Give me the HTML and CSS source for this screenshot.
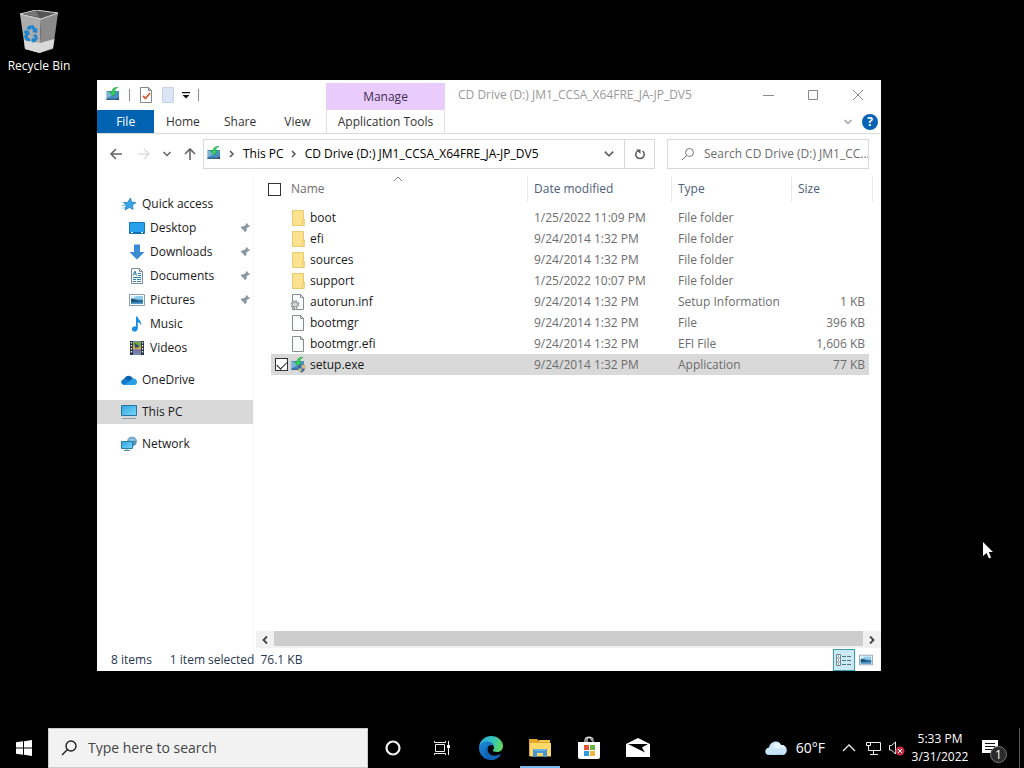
FILE: index.html
```html
<!DOCTYPE html>
<html lang="en">
<head>
  <meta charset="utf-8">
  <title>CD Drive (D:) JM1_CCSA_X64FRE_JA-JP_DV5</title>
  <meta name="viewport" content="width=device-width, initial-scale=1">
  <link rel="stylesheet" href="styles.css">
</head>
<body>

  <!-- Shared icons -->
  <svg class="icon-defs" width="0" height="0" aria-hidden="true">
    <defs>
      <linearGradient id="screen-fill" x1="0" y1="0" x2="1" y2="1">
        <stop offset="0" stop-color="#2ea5dc"/>
        <stop offset="1" stop-color="#7bd6fa"/>
      </linearGradient>
    </defs>
    <symbol id="drive" viewBox="0 0 16 16">
      <path d="M1.500 4H14v9H1.500z" fill="#4a8fc0"/>
      <path d="M2 5l11 0-11 6z" fill="#7eb6d8"/>
      <path d="M1.500 11.500h12.500v1.500h-12.500z" fill="#36638a"/>
      <path d="M11 13l3-3v3z" fill="#334a60"/>
      <path d="M13 .5C9 0 7 2 7 5H4.500L8 9l3.500-4H9.500C9.500 3 10.500 1.500 13 .5z" fill="#35d35b" stroke="#1a9c42" stroke-width=".6"/>
    </symbol>
    <symbol id="folder" viewBox="0 0 16 16">
      <path d="M2 .5h12v15H2z" fill="#fbe08a"/>
      <path d="M2.500.5h11v15h-11z" fill="#fce391" stroke="#e9cb6c"/>
      <path d="M12.500 9h2v6.500h-2z" fill="#f8dc80" stroke="#e3c25c" stroke-width=".6"/>
    </symbol>
    <symbol id="page" viewBox="0 0 16 16">
      <path d="M2.500.5h8l3 3v12h-11z" fill="#fdfdfd" stroke="#868b90"/>
      <path d="M10.500.5v3h3" fill="none" stroke="#868b90"/>
    </symbol>
    <symbol id="picture" viewBox="0 0 16 16">
      <path d="M.5 2.500h15v11H.5z" fill="#fff" stroke="#8a9db0"/>
      <path d="M2 4h12v8H2z" fill="#8dcbed"/>
      <path d="M2 8c3-2 5 0 12 0v4H2z" fill="#2a6f9f"/>
      <path d="M2 7c3-1 5 2 8 3H2z" fill="#215372"/>
      <path d="M2 10.500h12V12H2z" fill="#4d9bc8"/>
      <path d="M2 4h5l-3 2H2z" fill="#def3fb"/>
    </symbol>
    <symbol id="pin" viewBox="0 0 12 12">
      <path d="M7.500 1l3.500 3.500-1 .7-.8-.2-1.800 2 .1 2-1.300 1.200-2.300-2.400L1 11l3-3.300L1.700 5.300 3 4.200l2 .1 2-1.700-.2-.8z" fill="#8d979f"/>
    </symbol>
    <symbol id="chevron" viewBox="0 0 10 10">
      <path d="M1.500 3l3.500 3.500L8.500 3" fill="none" stroke="currentColor" stroke-width="1.500"/>
    </symbol>
  </svg>

  <main class="desktop">
    <a class="shortcut" href="#recycle-bin">
      <svg width="40" height="44" viewBox="0 0 40 44" aria-hidden="true">
        <path d="M1 4l21 4-1.500 35L6 39z" fill="#adadad"/>
        <path d="M22 8l17-5-5 36-13.500 4z" fill="#8b8b8b"/>
        <path d="M5 30l16 3 14.500-4L34 38l-13.500 5L6 39z" fill="#d9d9d9"/>
        <path d="M1 4L17 0l22 3-17 6z" fill="#555" stroke="#d9d9d9"/>
        <path d="M17 1l3 6L4 4z" fill="#777"/>
        <g fill="#1e84cf">
          <path d="M9 16l5-1 3 4 1.500-1-.5 5-5-1 1.500-1-2-3-1.500 2-3.500-1z"/>
          <path d="M6 20l4 1 1 4-1.500-.5-1 3 2.500 1v3l-4-1-2-4 1.500-3-2-.5z"/>
          <path d="M17 24l2 4-2.500 4-2 0v1.500L12 30l3-3v1.500h1.500L14 25z"/>
        </g>
      </svg>
      <span>Recycle Bin</span>
    </a>

    <section class="window" aria-label="File Explorer">
      <header class="ribbon">
        <div class="quick-bar">
          <svg width="16" height="16"><use href="#drive"/></svg>
          <i class="bar-line"></i>
          <button aria-label="Properties">
            <svg width="16" height="18" viewBox="0 0 16 18">
              <path d="M2.500 1.500h8l3 3v12h-11z" fill="#fff" stroke="#858585"/>
              <path d="M10.500 1.500v3h3" fill="none" stroke="#858585"/>
              <path d="M5 10l2.500 2.500L12 7" fill="none" stroke="#e2582c" stroke-width="1.800"/>
            </svg>
          </button>
          <button aria-label="New folder">
            <svg width="16" height="18" viewBox="0 0 16 18">
              <path d="M2.500 1.500h11v15h-11z" fill="#dbe5f3" stroke="#c6d2e2"/>
              <path d="M12 11h2v5.500h-2z" fill="#cddaeb"/>
            </svg>
          </button>
          <button aria-label="Customize Quick Access Toolbar">
            <svg width="8" height="10" viewBox="0 0 8 10">
              <path d="M0 2h8v1.200H0zM.5 5h7L4 8.500z" fill="#111"/>
            </svg>
          </button>
          <i class="bar-line"></i>
        </div>
        <nav class="tabs">
          <button class="tab file-tab">File</button>
          <button class="tab">Home</button>
          <button class="tab">Share</button>
          <button class="tab">View</button>
        </nav>
        <div class="manage">Manage</div>
        <button class="tab tools-tab">Application Tools</button>
        <div class="title-bar">
          <h1>CD Drive (D:) JM1_CCSA_X64FRE_JA-JP_DV5</h1>
          <div class="window-btns">
            <button aria-label="Minimize"><svg width="12" height="12"><path d="M1 6.500h11" stroke="#888"/></svg></button>
            <button aria-label="Maximize"><svg width="12" height="12"><path d="M1.500 1.500h9v9h-9z" fill="none" stroke="#888"/></svg></button>
            <button aria-label="Close"><svg width="12" height="12"><path d="M1 1l10 10M11 1L1 11" stroke="#888"/></svg></button>
          </div>
        </div>
        <div class="ribbon-end">
          <button class="light" aria-label="Expand the ribbon"><svg width="10" height="10"><use href="#chevron"/></svg></button>
          <button class="help" aria-label="Help">?</button>
        </div>
      </header>

      <div class="nav-bar">
        <div class="nav-btns">
          <button aria-label="Back"><svg width="14" height="14"><path d="M13 7H2M7 2L2 7l5 5" fill="none" stroke="#666" stroke-width="1.600"/></svg></button>
          <button aria-label="Forward"><svg width="14" height="14"><path d="M1 7h11M7 2l5 5-5 5" fill="none" stroke="#dedede" stroke-width="1.500"/></svg></button>
          <button class="recent" aria-label="Recent locations"><svg width="10" height="10"><use href="#chevron"/></svg></button>
          <button aria-label="Up"><svg width="14" height="14"><path d="M7 13V2M2 7l5-5 5 5" fill="none" stroke="#666" stroke-width="1.600"/></svg></button>
        </div>
        <div class="address">
          <svg width="16" height="16"><use href="#drive"/></svg>
          <svg class="crumb-arrow" width="10" height="10"><path d="M3 2l3 3-3 3" fill="none" stroke="#555" stroke-width="1.500"/></svg>
          <button>This PC</button>
          <svg class="crumb-arrow" width="10" height="10"><path d="M3 2l3 3-3 3" fill="none" stroke="#555" stroke-width="1.500"/></svg>
          <button class="crumb-last">CD Drive (D:) JM1_CCSA_X64FRE_JA-JP_DV5</button>
          <button class="address-drop" aria-label="Previous locations"><svg width="12" height="12"><use href="#chevron"/></svg></button>
          <button class="refresh" aria-label="Refresh">
            <svg width="12" height="12"><path d="M3.500 3a4.200 4.200 0 1 0 5 0" fill="none" stroke="#555" stroke-width="1.500"/><path d="M2 1.500h4.500V6z" fill="#555"/></svg>
          </button>
        </div>
        <label class="find">
          <svg width="14" height="14"><circle cx="8.500" cy="5.500" r="4" fill="none" stroke="#777"/><path d="M5.500 8.500L1 13" stroke="#777"/></svg>
          <input type="text" placeholder="Search CD Drive (D:) JM1_CC..." aria-label="Search CD Drive">
        </label>
      </div>

      <div class="content">
        <nav class="sidebar">
          <a class="place" href="#quick"><svg width="16" height="16"><path d="M9.500 2l1 4 4.500.5-3.500 2.700.5 4.300-3.500-2L4 14l1-4.500L2.500 6.500h4z" fill="#37a5e6" stroke="#1878bd" stroke-width=".7"/><path d="M1 9.500h3M1.500 12h2" stroke="#7cc2ec"/></svg>Quick access</a>
          <a class="place sub" href="#desktop"><svg width="16" height="16"><path d="M.5 2.500h15v11H.5z" fill="#29a0ee" stroke="#1478bf"/><path d="M1 12h14v1H1z" fill="#0f68a8"/><path d="M2 12.500h2m8 0h2" stroke="#fff"/></svg>Desktop<svg class="pin" width="12" height="12"><use href="#pin"/></svg></a>
          <a class="place sub" href="#downloads"><svg width="16" height="16"><path d="M5 .5h6V8h4.500L8 15.500.5 8H5z" fill="#3d8bd4"/></svg>Downloads<svg class="pin" width="12" height="12"><use href="#pin"/></svg></a>
          <a class="place sub" href="#documents"><svg width="16" height="16"><path d="M2.500.5h8l3 3v12h-11z" fill="#fff" stroke="#7d8b98"/><path d="M10.500.5v3h3" fill="none" stroke="#7d8b98"/><path d="M4 7.500L6 3l1.500 4.500M4.500 6h3M9 5.500h3M9 7.500h3M4 9.500h8M4 11.500h3m1 0h4M4 13.500h3m1 0h4" fill="none" stroke="#2f86a8"/></svg>Documents<svg class="pin" width="12" height="12"><use href="#pin"/></svg></a>
          <a class="place sub" href="#pictures"><svg width="16" height="16"><use href="#picture"/></svg>Pictures<svg class="pin" width="12" height="12"><use href="#pin"/></svg></a>
          <a class="place sub" href="#music"><svg width="16" height="16"><path d="M7 .5h1.500C9 4 13 4.500 12 9.500 11.500 7 10 6.500 8.800 6.500V12c0 5-6.300 4.500-6 1 .2-2 2.200-3 4.200-2.500z" fill="#1b8ee0"/></svg>Music</a>
          <a class="place sub" href="#videos"><svg width="16" height="16"><path d="M1 1h14v14H1z" fill="#2d3040"/><path d="M4 1h8v14H4z" fill="#698ab1"/><path d="M4 2h8v4H4z" fill="#78a845"/><path d="M4 6h8v3H4z" fill="#d6b437"/><path d="M6 3l5 4-5 1z" fill="#324a84"/><path d="M5 10h6v3H5z" fill="#8770a4"/><path d="M2.500 2v12M13.500 2v12" stroke="#eee" stroke-width="1.300" stroke-dasharray="1.500 1.500"/></svg>Videos</a>
          <a class="place top" href="#onedrive"><svg width="16" height="16"><path d="M2.500 8C4 3 9.500 2 12 6.500L8 11z" fill="#0a62b2"/><path d="M3.500 13C-.5 13-1 8 2.500 7.300 5 6.500 7 8 9 9.500l4 3.500z" fill="#1479cc"/><path d="M3 13l9-6.500c3-.3 4 2 4 3.500 0 2-1 3-3 3z" fill="#27a0e8"/></svg>OneDrive</a>
          <a class="place top current" href="#this-pc"><svg width="16" height="16"><path d="M.5 1.500h15v10H.5z" fill="url(#screen-fill)" stroke="#25739e"/><path d="M1 14.500h14" stroke="#8b9cab"/></svg>This PC</a>
          <a class="place top" href="#network"><svg width="16" height="16"><circle cx="11" cy="5.500" r="4.800" fill="#4f8fb8"/><path d="M7 4h8M11 1v8M8 2c2 2 4 2 6 0" fill="none" stroke="#a9d2e8"/><path d="M.5 5.500h11v7H.5z" fill="url(#screen-fill)" stroke="#237fae"/><path d="M3 14.500h6M6 12v2" stroke="#508cad"/></svg>Network</a>
        </nav>

        <div class="pane">
          <table class="files">
            <thead>
              <tr>
                <th class="col-check"><input type="checkbox" aria-label="Select all"></th>
                <th class="col-name"><button>Name</button><svg class="sort" width="10" height="6"><path d="M1 5l4-4 4 4" fill="none" stroke="#777"/></svg></th>
                <th class="col-date"><button>Date modified</button></th>
                <th class="col-type"><button>Type</button></th>
                <th class="col-size"><button>Size</button></th>
              </tr>
            </thead>
            <tbody>
              <tr><td></td><td><span class="file"><svg width="16" height="16"><use href="#folder"/></svg>boot</span></td><td>1/25/2022 11:09 PM</td><td>File folder</td><td></td></tr>
              <tr><td></td><td><span class="file"><svg width="16" height="16"><use href="#folder"/></svg>efi</span></td><td>9/24/2014 1:32 PM</td><td>File folder</td><td></td></tr>
              <tr><td></td><td><span class="file"><svg width="16" height="16"><use href="#folder"/></svg>sources</span></td><td>9/24/2014 1:32 PM</td><td>File folder</td><td></td></tr>
              <tr><td></td><td><span class="file"><svg width="16" height="16"><use href="#folder"/></svg>support</span></td><td>1/25/2022 10:07 PM</td><td>File folder</td><td></td></tr>
              <tr><td></td><td><span class="file"><svg width="16" height="16"><use href="#page"/><circle cx="5" cy="10.500" r="3.200" fill="#eee" stroke="#999" stroke-width="2.500" stroke-dasharray="1.500 1"/><circle cx="5" cy="10.500" r="2.500" fill="#eee" stroke="#999"/><circle cx="5" cy="10.500" r="1" fill="#fff" stroke="#999" stroke-width=".5"/></svg>autorun.inf</span></td><td>9/24/2014 1:32 PM</td><td>Setup Information</td><td>1 KB</td></tr>
              <tr><td></td><td><span class="file"><svg width="16" height="16"><use href="#page"/></svg>bootmgr</span></td><td>9/24/2014 1:32 PM</td><td>File</td><td>396 KB</td></tr>
              <tr><td></td><td><span class="file"><svg width="16" height="16"><use href="#page"/></svg>bootmgr.efi</span></td><td>9/24/2014 1:32 PM</td><td>EFI File</td><td>1,606 KB</td></tr>
              <tr class="selected"><td><input type="checkbox" checked aria-label="Select setup.exe"></td><td><span class="file"><svg width="16" height="16"><use href="#drive"/><path d="M8 8.500l3.500-1 3.500 1c0 4-1 6-3.500 7C9 14.500 8 12.500 8 8.500z" fill="#3568b5" stroke="#667" stroke-width=".5"/><path d="M11.500 7.800v3.700H15c.2-1 .3-2 0-3zM11.500 11.500v3.700c-2-.8-3-2-3.300-3.700z" fill="#d9c27a"/></svg>setup.exe</span></td><td>9/24/2014 1:32 PM</td><td>Application</td><td>77 KB</td></tr>
            </tbody>
          </table>
          <div class="scrollbar">
            <button aria-label="Scroll left"><svg width="10" height="10"><path d="M7 1.500L3.500 5 7 8.500" fill="none" stroke="#444" stroke-width="1.800"/></svg></button>
            <div class="thumb"></div>
            <button aria-label="Scroll right"><svg width="10" height="10"><path d="M3 1.500L6.500 5 3 8.500" fill="none" stroke="#444" stroke-width="1.800"/></svg></button>
          </div>
        </div>
      </div>

      <footer class="status">
        <span class="count">8 items</span>
        <span>1 item selected</span>
        <span>76.1 KB</span>
        <div class="views">
          <button class="active" aria-label="Details view"><svg width="18" height="14"><path d="M1.500 1.500h4v11h-4zM1.500 5h4M1.500 9h4" fill="#fff" stroke="#6d8795"/><path d="M3 3h1M3 7h1M3 11h1" stroke="#26485c"/><path d="M7 3.500h4m1 0h4M7 7.500h4m1 0h4M7 11.500h4m1 0h4" stroke="#557484"/></svg></button>
          <button aria-label="Large icons view"><svg width="14" height="14"><use href="#picture"/></svg></button>
        </div>
      </footer>
    </section>

    <svg class="cursor" width="12" height="18" aria-hidden="true"><path d="M1 0v14l3.500-3L7 16.500l2-1L6.800 10H11z" fill="#fff"/></svg>
  </main>

  <footer class="taskbar">
    <button class="start" aria-label="Start"><svg width="16" height="16"><path d="M0 2.300L7 1.300v6.200H0zM8 1.200L16 0v7.500H8zM0 8.500h7v6.200l-7-1zM8 8.500h8V16l-8-1.200z" fill="#fff"/></svg></button>
    <label class="task-search">
      <svg width="18" height="18"><circle cx="11" cy="7" r="5" fill="none" stroke="#222" stroke-width="1.400"/><path d="M7.500 10.500L2 16" stroke="#222" stroke-width="1.400"/></svg>
      <input type="text" placeholder="Type here to search" aria-label="Type here to search">
    </label>
    <div class="apps">
      <button aria-label="Cortana"><svg width="16" height="16"><circle cx="8" cy="8" r="6.500" fill="none" stroke="#f3f3f3" stroke-width="2.200"/></svg></button>
      <button aria-label="Task View"><svg width="18" height="16"><path d="M2.500 4.500h9v7h-9zM1.500 1v1.500h11V1M1.500 15v-1.500h11V15M15.500 1v14" fill="none" stroke="#eee"/><path d="M14 5h3v3h-3z" fill="#fff"/></svg></button>
      <button aria-label="Microsoft Edge">
        <svg width="24" height="24" viewBox="0 0 24 24">
          <defs>
            <linearGradient id="edge-top" x1="0" y1=".3" x2="1" y2=".5"><stop offset="0" stop-color="#25a7e0"/><stop offset=".6" stop-color="#38c5b1"/><stop offset="1" stop-color="#64d958"/></linearGradient>
            <linearGradient id="edge-low" x1="0" y1="0" x2="1" y2="1"><stop offset="0" stop-color="#1b8bda"/><stop offset="1" stop-color="#0c4f9c"/></linearGradient>
          </defs>
          <path d="M0 11C1 4 6 0 12 0c7 0 12 5 12 10 0 4-3 6-6 6-3 0-4.500-1-4-2 1-1 1.500-2 1-3-1-4-9-6-15 0z" fill="url(#edge-top)"/>
          <path d="M0 12C1 7 5 5 9 5.500c3 .3 5.500 2 6 4.500-1-1-3-1.500-4.500-.5-4 2.500-2 9 3 10 3 .7 6-.2 8-1.500-2 4-6 6-10 6C5 24 0 18 0 12z" fill="url(#edge-low)"/>
          <path d="M9 10c-2 5 1 10 7 10 2 0 4-.7 6-2-2 4-6 6-10 6-6-3-8-11-3-14z" fill="#1265b6"/>
        </svg>
      </button>
      <button class="open" aria-label="File Explorer"><svg width="22" height="20"><path d="M0 1h8l2 2h11v15H0z" fill="#e3a72d"/><path d="M1 5h21v13.500H1z" fill="#ffd968"/><path d="M10 2h11v2H10z" fill="#f6c54d"/><path d="M4 11h14v8h-4v-4H8v4H4z" fill="#4694d4"/><path d="M5 11h12v2H5z" fill="#68b4e8"/></svg></button>
      <button aria-label="Microsoft Store"><svg width="24" height="24"><path d="M8 7V4c0-4 8-4 8 0v3M10 6V2.500c2-2 4.500-.5 4.500 2" fill="none" stroke="#ddd" stroke-width="1.200"/><path d="M1 6h22v15c0 1-1 2-2 2H3c-1 0-2-1-2-2z" fill="#fff"/><path d="M7 9h5v5H7z" fill="#e7543d"/><path d="M13 9h5v5h-5z" fill="#6db548"/><path d="M7 15h5v5H7z" fill="#2b9ed8"/><path d="M13 15h5v5h-5z" fill="#efb73a"/></svg></button>
      <button aria-label="Mail"><svg width="24" height="20"><path d="M0 6L12 0l12 6v13H0z" fill="#fff"/><path d="M2 6h20l-6 3.500 3 5L10 10z" fill="#050505"/></svg></button>
    </div>
    <div class="tray">
      <button class="weather">
        <svg width="22" height="16" viewBox="0 0 22 16"><path d="M4 15C-1 15-1 8 4 7.500 5 1 14-1 16 5c7-1 8 10 1 10z" fill="#c8e6f8"/><path d="M8 7c0-4 5-5 8-2 3 0 5 2 5 4-4-2-5-2-8 0z" fill="#e6f4fd"/><path d="M3 14c5 1 11 1 15-1-1 1.500-2 2-4 2H4z" fill="#8fc2e8"/></svg>
        60°F
      </button>
      <button aria-label="Show hidden icons"><svg width="14" height="8"><path d="M1 7l6-6 6 6" fill="none" stroke="#eee" stroke-width="1.300"/></svg></button>
      <button aria-label="Network"><svg width="17" height="16"><path d="M5.500 2.500h10v8h-12V7M8.500 11v3M5 14.500h8" fill="none" stroke="#eee"/><path d="M1.500 2.500h4v3h-4zM3.500 5v3" fill="#000" stroke="#eee"/></svg></button>
      <button aria-label="Volume muted"><svg width="18" height="16"><path d="M1.500 5.500h2L7.500 2v12l-4-4h-2z" fill="none" stroke="#eee"/><circle cx="12" cy="11" r="4.500" fill="#c82c3d"/><path d="M10 9l4 4m0-4l-4 4" stroke="#fff"/></svg></button>
      <button class="clock"><time>5:33 PM</time><time>3/31/2022</time></button>
      <button class="notices" aria-label="1 new notification"><svg width="16" height="16"><path d="M0 0h16v13h-3v3l-3-3H0z" fill="#fff"/><path d="M3 3.500h10M3 6.500h10M3 9.500h7" stroke="#111"/></svg><span class="badge">1</span></button>
      <button class="show-desktop" aria-label="Show desktop"></button>
    </div>
  </footer>

</body>
</html>
```
FILE: styles.css
```css
* {
  box-sizing: border-box;
}

html, body {
  height: 100%;
  margin: 0;
}

body {
  display: flex;
  flex-direction: column;
  overflow: hidden;
  background: black;
  color: #1a1a1a;
  font: 12px/16px "Open Sans", "Noto Sans", sans-serif;
}

button, input {
  margin: 0;
  padding: 0;
  border: none;
  background: none;
  color: inherit;
  font: inherit;
}

button {
  display: flex;
  align-items: center;
  justify-content: center;
}

a {
  color: inherit;
  text-decoration: none;
}

svg {
  display: block;
  flex: none;
}

.icon-defs {
  position: absolute;
}

.desktop {
  flex: 1;
  position: relative;
}

.shortcut {
  position: absolute;
  left: 0;
  top: 10px;
  width: 78px;
  display: flex;
  flex-direction: column;
  align-items: center;
  gap: 4px;
  color: white;
}

/* Explorer window */
.window {
  position: absolute;
  left: 97px;
  right: 143px;
  top: 80px;
  bottom: 57px;
  display: flex;
  flex-direction: column;
  background: white;
}

.ribbon {
  display: grid;
  grid-template-columns: 229px 119px 1fr;
  grid-template-rows: 30px 23px;
  grid-auto-flow: column;
  border-bottom: 1px solid #dadbdc;
}

.quick-bar {
  display: flex;
  align-items: center;
  gap: 6px;
  padding-left: 8px;
}

.bar-line {
  width: 1px;
  height: 12px;
  margin: 0 2px;
  background: #888;
}

.tabs {
  display: flex;
}

.tab {
  flex: 1;
  color: #333;
}

.file-tab {
  background: #0063b1;
  color: white;
}

.manage {
  display: flex;
  align-items: center;
  justify-content: center;
  margin-top: 3px;
  background: #e9ccfb;
  color: #3f2a55;
}

.tools-tab {
  border: solid #e4dce9;
  border-width: 0 1px;
}

.title-bar {
  display: flex;
  align-items: center;
  justify-content: space-between;
  padding-left: 13px;
}

h1 {
  margin: 0;
  font-size: 12px;
  font-weight: normal;
  color: #999;
}

.window-btns {
  display: flex;
  padding-right: 1px;
}

.window-btns button {
  width: 45px;
  height: 28px;
}

.ribbon-end {
  display: flex;
  align-items: center;
  justify-content: flex-end;
  gap: 9px;
  padding-right: 3px;
}

.light {
  color: #a5a5a5;
}

.help {
  width: 16px;
  height: 16px;
  border-radius: 50%;
  background: #0863b5;
  color: white;
  font-weight: bold;
}

.nav-bar {
  display: flex;
  align-items: center;
  height: 40px;
  padding-right: 12px;
}

.nav-btns {
  display: flex;
  align-items: center;
  gap: 14px;
  width: 106px;
  padding-left: 12px;
}

.nav-btns .recent {
  margin: 0 -3px;
}

.recent, .address-drop {
  color: #666;
}

.address, .find {
  display: flex;
  align-items: center;
  height: 30px;
  border: 1px solid #d9d9d9;
}

.address {
  flex: 1;
  min-width: 0;
  padding-left: 2px;
  color: #000;
}

.crumb-arrow {
  margin: 0 6px 0 5px;
}

.crumb-last {
  margin-right: auto;
  white-space: nowrap;
}

.address-drop {
  width: 30px;
}

.refresh {
  width: 30px;
  height: 100%;
  border-left: 1px solid #d9d9d9;
}

.find {
  width: 202px;
  margin-left: 12px;
  padding-left: 13px;
  gap: 9px;
}

.find input {
  flex: 1;
  min-width: 0;
}

.find input::placeholder {
  color: #6d6d6d;
  opacity: 1;
}

.content {
  flex: 1;
  display: flex;
  min-height: 0;
}

.sidebar {
  width: 157px;
  padding-top: 18px;
  border-right: 1px solid #f7f7f7;
}

.place {
  display: flex;
  align-items: center;
  gap: 5px;
  height: 24px;
  padding-left: 24px;
}

.sub {
  padding-left: 32px;
}

.top {
  margin-top: 8px;
}

.current {
  background: #d9d9d9;
}

.pin {
  margin-left: auto;
  margin-right: 2px;
}

.pane {
  flex: 1;
  display: flex;
  flex-direction: column;
  justify-content: space-between;
  min-width: 0;
}

.files {
  margin: 2px 8px 0 14px;
  border-spacing: 0;
  table-layout: fixed;
}

.files th {
  position: relative;
  padding: 0 0 5px;
  font-weight: normal;
}

.files th button {
  justify-content: flex-start;
  width: 100%;
  height: 26px;
  padding-left: 6px;
  border-right: 1px solid #e8e8e8;
  color: #4c607a;
}

.files .col-name button {
  padding-left: 3px;
  color: #6d6d6d;
}

.col-check { width: 20px; }
.col-date { width: 144px; }
.col-type { width: 120px; }
.col-size { width: 81px; }

.sort {
  position: absolute;
  top: 0;
  left: calc(50% - 15px);
}

.files td {
  height: 21px;
  padding: 0 0 0 6px;
  color: #6d6d6d;
  background-clip: padding-box;
}

.files td:first-child {
  padding-left: 4px;
  border-left: 3px solid transparent;
}

.files td:nth-child(2) {
  padding-left: 2px;
  color: #1a1a1a;
}

.files td:last-child {
  padding-right: 4px;
  border-right: 4px solid transparent;
  text-align: right;
}

.selected td {
  background-color: #d9d9d9;
}

.file {
  display: flex;
  align-items: center;
  gap: 4px;
}

.files input {
  appearance: none;
  display: block;
  width: 13px;
  height: 13px;
  border: 1px solid #333;
  background: white;
}

/* tick is a rotated corner */
.files input:checked::before {
  content: "";
  display: block;
  width: 9px;
  height: 5px;
  margin: 2px 1px;
  border: solid #222;
  border-width: 0 0 1px 1px;
  transform: rotate(-45deg);
}

.scrollbar {
  display: flex;
  height: 17px;
  margin-left: 2px;
  background: #f1f1f1;
}

.scrollbar button {
  width: 18px;
}

.thumb {
  flex: 1;
  height: 15px;
  background: #cdcdcd;
}

.status {
  display: flex;
  align-items: center;
  gap: 6px;
  height: 23px;
  padding: 0 4px 0 14px;
  color: #26374f;
}

.count {
  margin-right: 12px;
}

.views {
  display: flex;
  margin-left: auto;
}

.views button {
  width: 22px;
  height: 22px;
}

.views .active {
  border: 1px solid #3c9bb5;
  background: #c9e9f3;
}

.cursor {
  position: absolute;
  left: 982px;
  top: 542px;
}

/* Taskbar */
.taskbar {
  display: flex;
  height: 40px;
  color: white;
}

.start {
  width: 48px;
}

.task-search {
  display: flex;
  align-items: center;
  gap: 10px;
  width: 320px;
  padding-left: 11px;
  border: 1px solid #ccc;
  background: #f2f2f2;
  color: #333;
  font-size: 14px;
}

.task-search input {
  flex: 1;
  min-width: 0;
}

.task-search input::placeholder {
  color: #444;
  opacity: 1;
}

.apps {
  display: flex;
}

.apps button {
  width: 49px;
}

.apps .open {
  background: linear-gradient(#76b9ed, #76b9ed) bottom / 40px 2px no-repeat;
}

.tray {
  display: flex;
  margin-left: auto;
}

.tray button {
  width: 24px;
}

.tray .weather {
  gap: 9px;
  width: auto;
  margin-right: 12px;
  font-size: 14px;
}

.tray .clock {
  flex-direction: column;
  gap: 2px;
  width: 62px;
}

.tray .notices {
  position: relative;
  width: 38px;
}

.badge {
  position: absolute;
  right: 2px;
  bottom: 5px;
  width: 17px;
  height: 17px;
  border: 1px solid #777;
  border-radius: 50%;
  background: #2b2b2b;
  line-height: 15px;
}

.tray .show-desktop {
  width: 5px;
  margin-left: 10px;
  border-left: 1px solid #555;
}
```
